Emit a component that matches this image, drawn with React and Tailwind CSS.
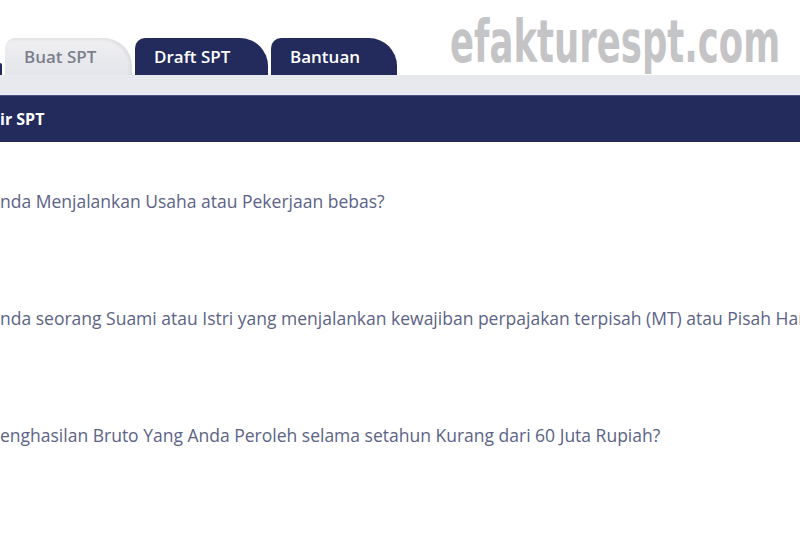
import React from "react";

const Tab = ({ label, active, width }) => (
  <div
    className={
      "h-[37px] rounded-tl-[10px] rounded-tr-[28px] flex items-center pl-[19px] text-[17px] font-semibold " +
      width +
      " " +
      (active
        ? "bg-gradient-to-b from-[#f0f0f2] to-[#e4e5ea] text-[#7b7f8c] shadow-[inset_-2px_2px_3px_rgba(0,0,0,0.06)]"
        : "bg-[#222b5c] text-white")
    }
  >
    {label}
  </div>
);

const questions = [
  "nda Menjalankan Usaha atau Pekerjaan bebas?",
  "nda seorang Suami atau Istri yang menjalankan kewajiban perpajakan terpisah (MT) atau Pisah Harta (PH)?",
  "enghasilan Bruto Yang Anda Peroleh selama setahun Kurang dari 60 Juta Rupiah?",
];

export default function App() {
  return (
    <div
      className="w-[800px] h-[533px] overflow-hidden bg-white"
      style={{ fontFamily: '"Open Sans", "Noto Sans", sans-serif' }}
    >
      <div className="relative h-[75px]">
        <div
          className="absolute left-[450px] top-[13px] text-[58px] font-bold leading-none text-[#c4c4c6] scale-x-[0.68] origin-left whitespace-nowrap"
          style={{ fontFamily: '"DejaVu Sans Condensed", "DejaVu Sans", sans-serif' }}
        >
          efakturespt.com
        </div>
        <div className="absolute left-0 bottom-0 flex items-end gap-[3px]">
          <div className="w-[2px] h-[12px] bg-[#222b5c] rounded-tr-[4px]" />
          <Tab label="Buat SPT" width="w-[127px]" active />
          <Tab label="Draft SPT" width="w-[133px]" />
          <Tab label="Bantuan" width="w-[126px]" />
        </div>
      </div>
      <div className="h-[20px] bg-[#e8e9ef]" />
      <div className="h-[47px] bg-[#222b5c] border-t border-[#4a5282] flex items-center text-white font-bold text-[16px]">
        ir SPT
      </div>
      <div className="flex flex-col pt-[47px] gap-[93px] text-[17.5px] font-medium text-[#5c6386] whitespace-nowrap">
        {questions.map((q) => (
          <div key={q} className="h-[24px] leading-[24px]">
            {q}
          </div>
        ))}
      </div>
    </div>
  );
}
